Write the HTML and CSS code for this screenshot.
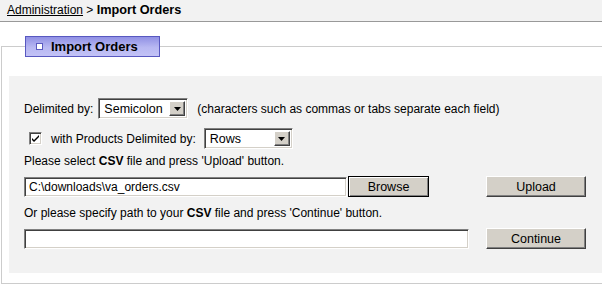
FILE: index.html
```html
<!DOCTYPE html>
<html>
<head>
<meta charset="utf-8">
<link rel="stylesheet" href="styles.css">
</head>
<body>
<div class="crumbs"><a href="#" class="crumb-link">Administration</a> &gt; <b class="crumb-cur">Import Orders</b></div>
<fieldset class="block">
  <legend class="tab"><span class="sq"></span>Import Orders</legend>
  <div class="panel">
    <div class="row r1">
      <span class="lbl">Delimited by:</span>
      <span class="sel sel-delim"><span class="val">Semicolon</span><span class="arr"><svg width="7" height="4" viewBox="0 0 7 4"><path d="M0 0H7L3.5 4Z" fill="#000"/></svg></span></span>
      <span class="note">(characters such as commas or tabs separate each field)</span>
    </div>
    <div class="row r2">
      <span class="chk"><svg width="9" height="9" viewBox="0 0 9 9"><path d="M1 4L3 6L8 1V3L3 8L1 6Z" fill="#000"/></svg></span>
      <span class="lbl lbl-wp">with Products Delimited by:</span>
      <span class="sel sel-rows"><span class="val">Rows</span><span class="arr"><svg width="7" height="4" viewBox="0 0 7 4"><path d="M0 0H7L3.5 4Z" fill="#000"/></svg></span></span>
    </div>
    <div class="line r3">Please select <b>CSV</b> file and press 'Upload' button.</div>
    <div class="grid r4">
      <div class="cell"><input class="txt txt-file" type="text" value="C:\downloads\va_orders.csv"><button class="btn btn-browse" type="button">Browse</button></div>
      <button class="btn btn-wide" type="button">Upload</button>
    </div>
    <div class="line r5">Or please specify path to your <b>CSV</b> file and press 'Continue' button.</div>
    <div class="grid r6">
      <div class="cell"><input class="txt txt-path" type="text" value=""></div>
      <button class="btn btn-wide" type="button">Continue</button>
    </div>
  </div>
</fieldset>
</body>
</html>
```
FILE: styles.css
```css
html, body {
  margin: 0;
  padding: 0;
  background: #fff;
  overflow: hidden;
}
body {
  font-family: "Liberation Sans", Arial, sans-serif;
  font-size: 12px;
  color: #000;
}
.crumbs {
  height: 21px;
  line-height: 21px;
  background: #f2f2f2;
  border-bottom: 1px solid #999;
  padding-left: 7px;
  font-size: 12px;
  white-space: nowrap;
}
.crumb-link {
  color: #000;
  text-decoration: underline;
}
.crumb-cur {
  font-size: 12.7px;
}
.block {
  margin: 14px 0 0 1px;
  padding: 19px 0 10px 7px;
  border: 1px solid #cccccc;
  border-right: 0;
  min-width: 0;
}
.tab {
  margin-left: 16px;
  padding: 0 21px 0 10px;
  height: 19px;
  line-height: 19px;
  border: 1px solid #5858c0;
  background: linear-gradient(#9090e4, #b8b8f2 55%, #c2c2f6);
  font-weight: bold;
  font-size: 13px;
  color: #000;
  display: flex;
  align-items: center;
}
.sq {
  width: 5px;
  height: 5px;
  border: 1px solid #5a5ac0;
  background: #fff;
  margin-right: 8px;
}
.panel {
  background: #f2f2f2;
  padding: 22px 0 24px 15px;
  white-space: nowrap;
}
.row {
  display: flex;
  align-items: center;
}
.line {
  line-height: 14px;
}
.r1 { height: 21px; }
.r2 { height: 21px; margin-top: 9px; }
.r3 { height: 14px; margin-top: 5px; }
.r4 { margin-top: 8px; }
.r5 { height: 14px; margin-top: 9px; }
.r6 { margin-top: 8px; }
.lbl { margin-right: 5px; }
.lbl-wp { margin-right: 8px; }
.note { margin-left: 9px; }
.sel {
  display: inline-flex;
  align-items: center;
  justify-content: space-between;
  height: 21px;
  box-sizing: border-box;
  background: #fff;
  border: 1px solid;
  border-color: #808080 #fff #fff #808080;
  box-shadow: inset 1px 1px 0 #404040, inset -1px -1px 0 #d4d0c8;
  padding: 0 2px 0 5px;
  font-size: 12.5px;
}
.sel-delim { width: 90px; }
.sel-rows { width: 89px; }
.arr {
  width: 16px;
  height: 15px;
  box-sizing: border-box;
  background: #d4d0c8;
  border: 1px solid;
  border-color: #fff #404040 #404040 #fff;
  box-shadow: inset -1px -1px 0 #808080;
  display: flex;
  align-items: center;
  justify-content: center;
}
.chk {
  width: 13px;
  height: 13px;
  box-sizing: border-box;
  margin: 0 9px 0 5px;
  background: #fff;
  border: 1px solid;
  border-color: #808080 #fff #fff #808080;
  box-shadow: inset 1px 1px 0 #404040, inset -1px -1px 0 #d4d0c8;
  display: flex;
  align-items: center;
  justify-content: center;
}
.grid {
  display: grid;
  grid-template-columns: 445px 100px;
  column-gap: 17px;
  align-items: center;
}
.cell {
  display: flex;
  align-items: center;
}
.txt {
  height: 20px;
  box-sizing: border-box;
  margin: 0;
  padding: 0 4px;
  background: #fff;
  border: 1px solid;
  border-color: #808080 #fff #fff #808080;
  box-shadow: inset 1px 1px 0 #404040, inset -1px -1px 0 #d4d0c8;
  font-family: "Liberation Sans", Arial, sans-serif;
  font-size: 12px;
  color: #000;
  outline: none;
}
.txt-file { width: 323px; }
.txt-path { width: 445px; }
.btn {
  margin: 0;
  height: 21px;
  box-sizing: border-box;
  background: #d4d0c8;
  border: 1px solid;
  border-color: #fff #404040 #404040 #fff;
  box-shadow: inset -1px -1px 0 #808080;
  font-family: "Liberation Sans", Arial, sans-serif;
  font-size: 12.5px;
  color: #000;
  padding: 0;
}
.btn-browse {
  width: 81px;
  margin-left: 1px;
  border: 1px solid #000;
  box-shadow: inset 1px 1px 0 #fff, inset -1px -1px 0 #808080;
}
.btn-wide {
  width: 100px;
}
```
